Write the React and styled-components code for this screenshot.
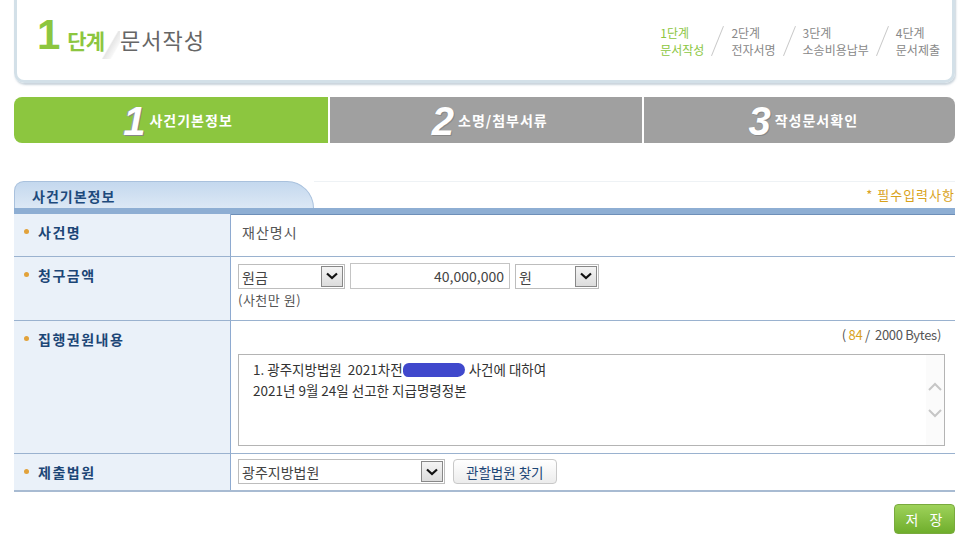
import React from "react";
import styled, { createGlobalStyle } from "styled-components";

const Global = createGlobalStyle`
  html, body { margin: 0; padding: 0; background: #fff; }
  body { font-family: "Noto Sans CJK KR", "Noto Sans", sans-serif; font-size: 13px; color: #444; }
  * { box-sizing: border-box; }
`;

const Page = styled.div`
  width: 963px;
  padding: 0 8px 0 14px;
`;

const HeaderCard = styled.div`
  margin-top: -12px;
  height: 95px;
  border: 3px solid #d3e0e8;
  border-top: none;
  border-radius: 0 0 10px 10px;
  box-shadow: 1px 2px 2px rgba(150, 170, 185, 0.5);
  display: flex;
  align-items: center;
  justify-content: space-between;
  padding: 0 12px 0 20px;
`;

const Title = styled.div`
  display: flex;
  align-items: baseline;
  margin-top: 2px;
`;

const BigNum = styled.span`
  font-family: "Liberation Sans", Arial, sans-serif;
  font-weight: bold;
  font-size: 42px;
  color: #8cc63f;
  margin-right: 7px;
`;

const StepWord = styled.span`
  font-size: 21px;
  font-weight: bold;
  color: #8cc63f;
  letter-spacing: -1px;
`;

const Slash = styled.span`
  display: inline-block;
  width: 18px;
  height: 28px;
  margin: 0 0 0 -2px;
  align-self: flex-end;
  background: linear-gradient(120deg, transparent 45%, #e6e6e6 50%, #f6f6f6 70%, transparent 75%);
`;

const DocWord = styled.span`
  font-size: 22px;
  color: #666;
  letter-spacing: 1px;
`;

const StepList = styled.div`
  display: flex;
  align-items: center;
  margin-top: 14px;
`;

const StepItem = styled.div`
  font-size: 12px;
  line-height: 17px;
  color: ${p => (p.$active ? "#8cc63f" : "#888")};
  text-align: left;
`;

const StepSep = styled.span`
  display: inline-block;
  width: 1px;
  height: 32px;
  background: #c8c8c8;
  transform: rotate(22deg);
  margin: 0 13px 0 13px;
`;

const TabBar = styled.div`
  display: flex;
  gap: 2px;
  margin-top: 14px;
  height: 46px;
`;

const Tab = styled.div`
  flex: ${p => (p.$first ? "0 0 314px" : "1 1 0")};
  background: ${p => (p.$active ? "#8cc63f" : "#a0a0a0")};
  border-radius: ${p => (p.$first ? "8px 0 0 8px" : p.$last ? "0 8px 8px 0" : "0")};
  display: flex;
  align-items: center;
  justify-content: center;
  gap: 4px;
  color: #fff;
  padding-left: ${p => (p.$first ? "14px" : "8px")};
`;

const TabNum = styled.span`
  font-family: "Liberation Sans", Arial, sans-serif;
  font-size: 40px;
  font-style: italic;
  font-weight: bold;
  color: #fff;
  text-shadow: 1px 1px 0 #888, -1px 0 0 #999;
  line-height: 1;
  margin-top: 2px;
`;

const TabText = styled.span`
  font-size: 14px;
  font-weight: bold;
  letter-spacing: 1px;
`;

const SectionHead = styled.div`
  margin-top: 38px;
  height: 33px;
  display: flex;
  align-items: stretch;
  border-bottom: 6px solid #8eaed3;
  box-shadow: 0 1px 0 #6e8fb8;
`;

const SectionTab = styled.div`
  width: 300px;
  height: 27px;
  background: linear-gradient(#c4d8ee, #dce8f5);
  border: 1px solid #a9c1dd;
  border-bottom: none;
  border-radius: 10px 28px 0 0;
  color: #1d4a7c;
  font-weight: bold;
  font-size: 14px;
  letter-spacing: 1px;
  padding: 4px 0 0 17px;
`;

const Required = styled.div`
  color: #d9a21b;
  font-size: 13px;
  letter-spacing: 1px;
  padding-top: 3px;
  border-top: 1px solid #eef2f5;
  flex: 1;
  text-align: right;
`;

const Table = styled.div`
  display: grid;
  grid-template-columns: 217px 1fr;
  border-bottom: 2px solid #a8bbd2;
`;

const Label = styled.div`
  background: #eaf1f9;
  border-right: 1px solid #8eaad0;
  border-top: ${p => (p.$first ? "none" : "1px solid #9ab2cf")};
  height: ${p => p.$h}px;
  padding: 8px 0 0 10px;
  color: #1c4676;
  font-weight: bold;
  font-size: 14px;
  letter-spacing: 1.5px;
  display: flex;
  align-items: flex-start;
`;

const Bullet = styled.span`
  display: inline-block;
  width: 5px;
  height: 5px;
  border-radius: 50%;
  background: #e2a23a;
  margin: 7px 9px 0 0;
  flex-shrink: 0;
`;

const Cell = styled.div`
  border-top: ${p => (p.$first ? "none" : "1px solid #9ab2cf")};
  height: ${p => p.$h}px;
  padding: ${p => p.$pad || "6px 10px 0 7px"};
`;

const PlainText = styled.div`
  font-size: 14px;
  color: #555;
  padding: 2px 0 0 4px;
  letter-spacing: 1px;
`;

const InputRow = styled.div`
  display: flex;
  gap: 5px;
  align-items: center;
`;

const SelectBox = styled.div`
  width: ${p => p.$w}px;
  height: 25px;
  border: 1px solid #bdbdbd;
  display: flex;
  align-items: stretch;
  justify-content: space-between;
  font-size: 14px;
  color: #444;
`;

const SelectText = styled.span`
  padding: 2px 0 0 3px;
`;

const ArrowBtn = styled.span`
  width: 22px;
  margin: 1px;
  border: 1px solid #888;
  background: linear-gradient(#f4f4f4, #dcdcdc);
  display: flex;
  align-items: center;
  justify-content: center;
`;

const AmountInput = styled.div`
  width: 160px;
  height: 26px;
  border: 1px solid #c4c4c4;
  font-size: 14px;
  color: #444;
  text-align: right;
  padding: 2px 5px 0 0;
`;

const Note = styled.div`
  font-size: 13px;
  color: #555;
  margin-top: 1px;
  letter-spacing: 0.5px;
`;

const ByteCount = styled.div`
  text-align: right;
  font-size: 13px;
  color: #555;
  padding-right: 4px;
  letter-spacing: -0.3px;
`;

const Hi = styled.span`
  color: #d9a21b;
`;

const TextArea = styled.div`
  margin-top: 10px;
  height: 92px;
  border: 1px solid #b4b4b4;
  display: flex;
  justify-content: space-between;
`;

const TextBody = styled.div`
  padding: 4px 0 0 14px;
  font-size: 13.5px;
  line-height: 21px;
  color: #333;
`;

const Blob = styled.span`
  display: inline-block;
  width: 62px;
  height: 14px;
  background: #3f48cc;
  border-radius: 8px 9px 10px 7px;
  vertical-align: -2px;
  margin: 0 4px 0 0;
`;

const ScrollCol = styled.div`
  width: 18px;
  background: #fbfbfb;
  display: flex;
  flex-direction: column;
  justify-content: center;
  align-items: center;
  gap: 18px;
`;

const FindBtn = styled.div`
  height: 25px;
  padding: 0 12px;
  border: 1px solid #c8c8c8;
  border-radius: 4px;
  background: linear-gradient(#ffffff, #ececec);
  color: #1c4676;
  font-size: 13.5px;
  display: flex;
  align-items: center;
  margin-left: 3px;
`;

const Footer = styled.div`
  display: flex;
  justify-content: flex-end;
  margin-top: 12px;
`;

const SaveBtn = styled.div`
  width: 61px;
  height: 30px;
  border-radius: 4px;
  background: linear-gradient(#9ed25a, #6fae2c);
  border: 1px solid #79aa3d;
  color: #fff;
  font-size: 14px;
  letter-spacing: 4px;
  display: flex;
  align-items: center;
  justify-content: center;
  padding-left: 3px;
`;

const Chev = ({ up }) => (
  <svg width="14" height="9" viewBox="0 0 14 9">
    <path d={up ? "M1 8 L7 2 L13 8" : "M1 1 L7 7 L13 1"} fill="none" stroke="#c6c6c6" strokeWidth="2" />
  </svg>
);

const Down = () => (
  <svg width="12" height="8" viewBox="0 0 12 8">
    <path d="M1 1.5 L6 6 L11 1.5" fill="none" stroke="#111" strokeWidth="2.2" />
  </svg>
);

export default function App() {
  return (
    <Page>
      <Global />
      <HeaderCard>
        <Title>
          <BigNum>1</BigNum>
          <StepWord>단계</StepWord>
          <Slash />
          <DocWord>문서작성</DocWord>
        </Title>
        <StepList>
          <StepItem $active>1단계<br />문서작성</StepItem>
          <StepSep />
          <StepItem>2단계<br />전자서명</StepItem>
          <StepSep />
          <StepItem>3단계<br />소송비용납부</StepItem>
          <StepSep />
          <StepItem>4단계<br />문서제출</StepItem>
        </StepList>
      </HeaderCard>

      <TabBar>
        <Tab $first $active><TabNum>1</TabNum><TabText>사건기본정보</TabText></Tab>
        <Tab><TabNum>2</TabNum><TabText>소명/첨부서류</TabText></Tab>
        <Tab $last><TabNum>3</TabNum><TabText>작성문서확인</TabText></Tab>
      </TabBar>

      <SectionHead>
        <SectionTab>사건기본정보</SectionTab>
        <Required>* 필수입력사항</Required>
      </SectionHead>

      <Table>
        <Label $first $h={42}><Bullet />사건명</Label>
        <Cell $first $h={42}><PlainText>재산명시</PlainText></Cell>

        <Label $h={64}><Bullet />청구금액</Label>
        <Cell $h={64}>
          <InputRow>
            <SelectBox $w={107}><SelectText>원금</SelectText><ArrowBtn><Down /></ArrowBtn></SelectBox>
            <AmountInput>40,000,000</AmountInput>
            <SelectBox $w={84}><SelectText>원</SelectText><ArrowBtn><Down /></ArrowBtn></SelectBox>
          </InputRow>
          <Note>(사천만 원)</Note>
        </Cell>

        <Label $h={133}><Bullet />집행권원내용</Label>
        <Cell $h={133} $pad="4px 10px 0 7px">
          <ByteCount>( <Hi>84</Hi> /&nbsp; 2000 Bytes)</ByteCount>
          <TextArea>
            <TextBody>
              1. 광주지방법원&nbsp; 2021차전<Blob />사건에 대하여<br />
              2021년 9월 24일 선고한 지급명령정본
            </TextBody>
            <ScrollCol><Chev up /><Chev /></ScrollCol>
          </TextArea>
        </Cell>

        <Label $h={37}><Bullet />제출법원</Label>
        <Cell $h={37} $pad="5px 10px 0 7px">
          <InputRow>
            <SelectBox $w={207}><SelectText>광주지방법원</SelectText><ArrowBtn><Down /></ArrowBtn></SelectBox>
            <FindBtn>관할법원 찾기</FindBtn>
          </InputRow>
        </Cell>
      </Table>

      <Footer>
        <SaveBtn>저 장</SaveBtn>
      </Footer>
    </Page>
  );
}
